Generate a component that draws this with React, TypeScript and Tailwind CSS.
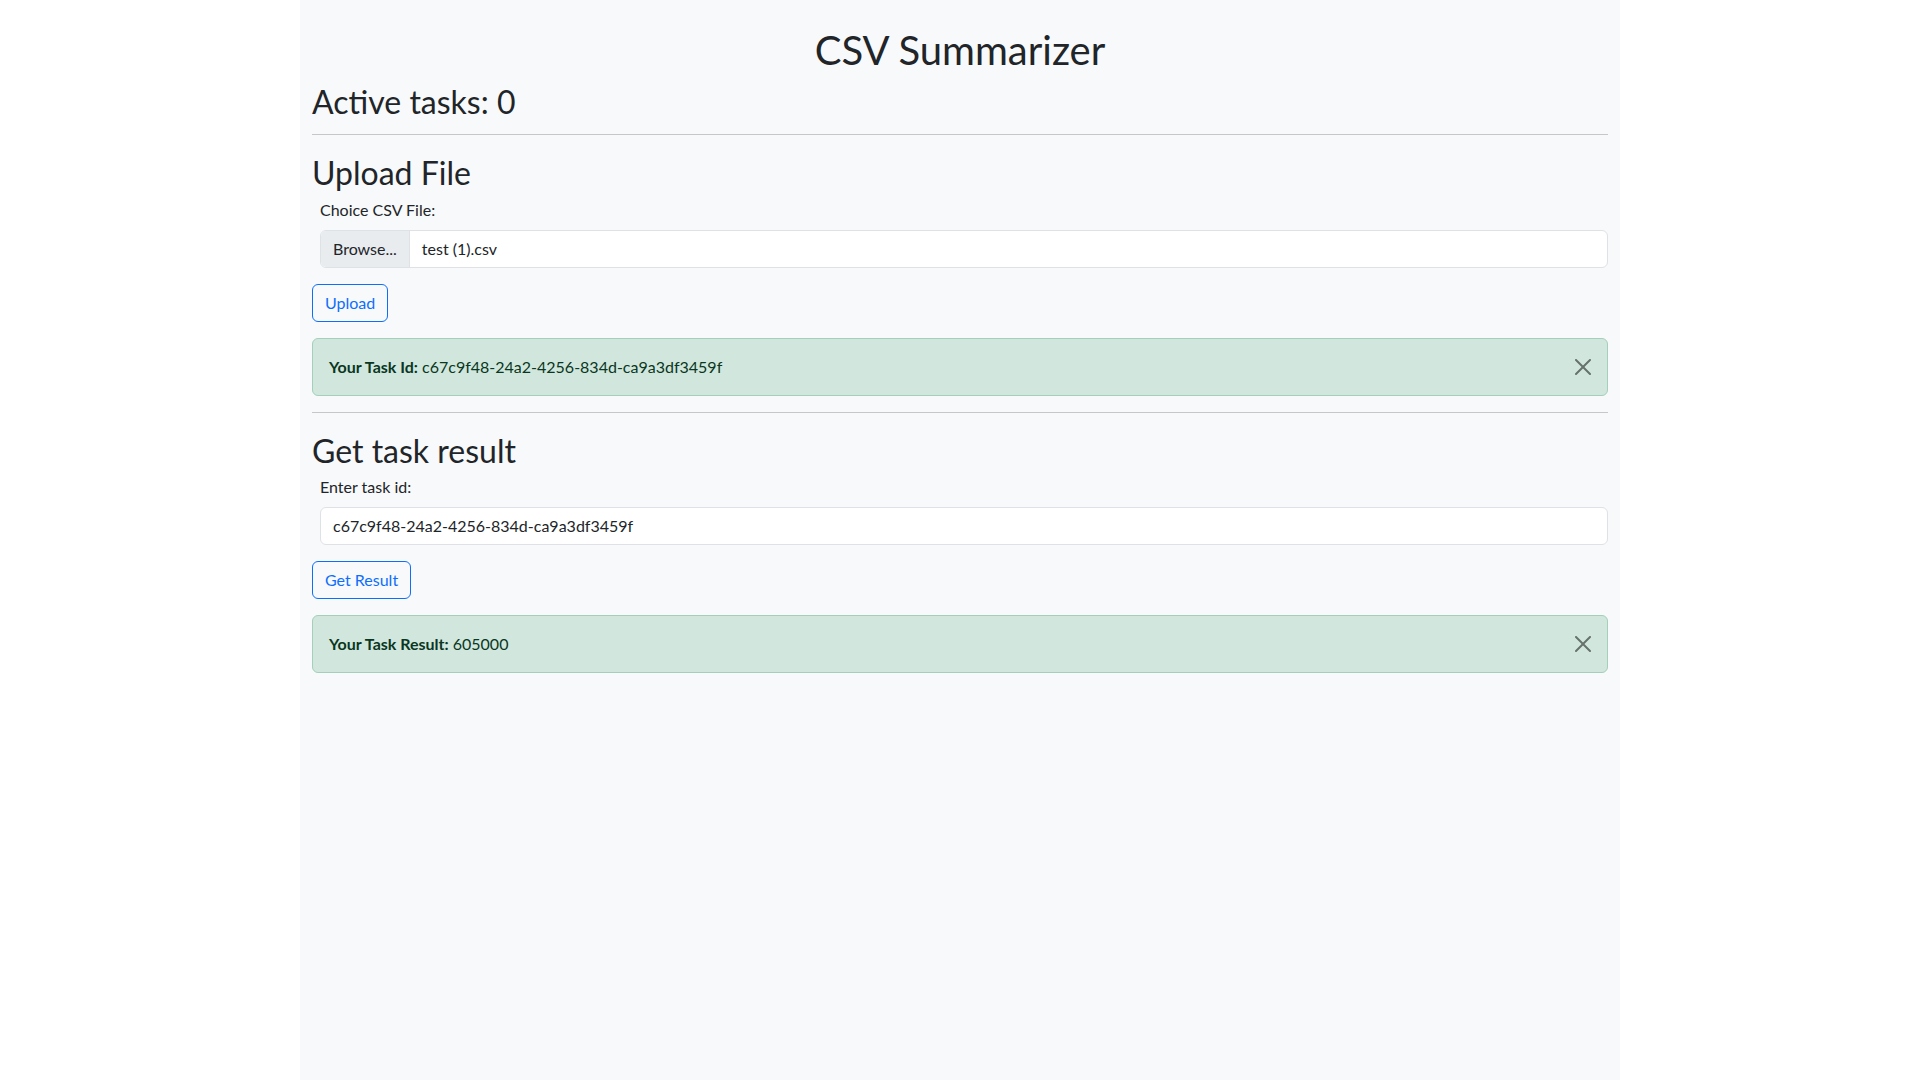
import React from 'react';

const font = { fontFamily: '"Segoe UI", Lato, "Noto Sans", sans-serif' };

const CloseIcon = () => (
  <svg viewBox="0 0 16 16" className="w-4 h-4" fill="#000">
    <path d="M.293.293a1 1 0 0 1 1.414 0L8 6.586 14.293.293a1 1 0 1 1 1.414 1.414L9.414 8l6.293 6.293a1 1 0 0 1-1.414 1.414L8 9.414l-6.293 6.293a1 1 0 0 1-1.414-1.414L6.586 8 .293 1.707a1 1 0 0 1 0-1.414" />
  </svg>
);

const Alert = ({ label, value }: { label: string; value: string }) => (
  <div className="relative mt-4 rounded-md border border-[#a3cfbb] bg-[#d1e7dd] p-4 pr-12 text-base leading-6 text-[#0a3622]">
    <strong className="font-bold">{label}</strong> {value}
    <button className="absolute right-0 top-0 px-4 py-5 opacity-50" aria-label="Close">
      <CloseIcon />
    </button>
  </div>
);

const OutlineButton = ({ children }: { children: React.ReactNode }) => (
  <button className="mt-4 block h-[38px] rounded-md border border-[#0d6efd] px-3 text-base leading-6 text-[#0d6efd]">
    {children}
  </button>
);

export default function App() {
  const taskId = 'c67c9f48-24a2-4256-834d-ca9a3df3459f';

  return (
    <div className="min-h-screen bg-white text-[#212529]" style={font}>
      <div className="mx-auto min-h-screen w-[1320px] bg-[#f8f9fa] px-3 pt-6">
        <h1 className="mb-2 pt-[5px] text-center text-[40px] font-normal leading-[43px]">CSV Summarizer</h1>
        <h2 className="pt-[4.8px] text-[32px] font-normal leading-[33.6px]">Active tasks: 0</h2>
        <hr className="my-4 border-[#c6c7c9]" />

        {/* upload */}
        <h2 className="mb-2 pt-[4.8px] text-[32px] font-normal leading-[33.6px]">Upload File</h2>
        <div className="pl-2">
          <label className="mb-2 block text-base leading-6">Choice CSV File:</label>
          <div className="flex h-[38px] overflow-hidden rounded-md border border-[#dee2e6] bg-white text-base leading-6">
            <span className="flex items-center border-r border-[#dee2e6] bg-[#e9ecef] px-3">Browse...</span>
            <span className="flex items-center px-3">test (1).csv</span>
          </div>
        </div>
        <OutlineButton>Upload</OutlineButton>
        <Alert label="Your Task Id:" value={taskId} />
        <hr className="my-4 border-[#c6c7c9]" />

        {/* result */}
        <h2 className="mb-2 pt-[4.8px] text-[32px] font-normal leading-[33.6px]">Get task result</h2>
        <div className="pl-2">
          <label className="mb-2 block text-base leading-6">Enter task id:</label>
          <div className="flex h-[38px] items-center rounded-md border border-[#dee2e6] bg-white px-3 text-base leading-6">
            {taskId}
          </div>
        </div>
        <OutlineButton>Get Result</OutlineButton>
        <Alert label="Your Task Result:" value="605000" />
      </div>
    </div>
  );
}
